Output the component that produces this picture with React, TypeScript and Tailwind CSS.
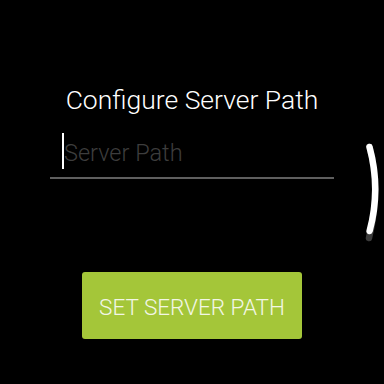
import React from 'react';

// round scroll indicator on the right edge
const ScrollIndicator = () => (
  <svg className="absolute right-0 top-0" width="384" height="384" viewBox="0 0 384 384">
    <path d="M369.5 147 Q381 189 369 238" fill="none" stroke="#3c3c3c" strokeWidth="6.5" strokeLinecap="round" />
    <path d="M369.5 147 Q381 189 369.6 231" fill="none" stroke="#ffffff" strokeWidth="6.5" strokeLinecap="round" />
  </svg>
);

export default function App() {
  return (
    <div className="relative w-[384px] h-[384px] bg-black overflow-hidden" style={{ fontFamily: 'Roboto, "Liberation Sans", sans-serif' }}>
      <div className="flex flex-col items-center pt-[87px]">
        <h1 className="text-[26.5px] leading-[26px] text-white font-light">Configure Server Path</h1>

        <div className="mt-[20px] w-[284px] flex items-center pl-[12px] pb-[8px] border-b-2 border-[#5f5f5f]">
          <div className="shrink-0 w-[2px] h-[36px] bg-white" />
          <input
            className="min-w-0 flex-1 h-[36px] pt-[4px] bg-transparent outline-none text-[23.5px] leading-[32px] font-light text-white placeholder:text-[#3d3d3d]"
            placeholder="Server Path"
          />
        </div>

        <button className="mt-[93px] w-[220px] h-[67px] pt-[5px] rounded-[3px] bg-[#a4c639] text-[22.5px] font-light text-[#f2f6e6] uppercase">
          Set Server Path
        </button>
      </div>

      <ScrollIndicator />
    </div>
  );
}
